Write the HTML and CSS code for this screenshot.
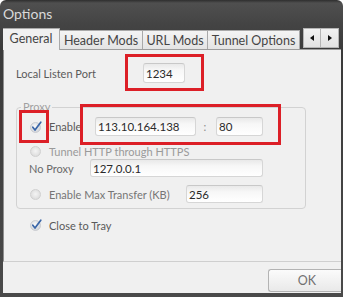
FILE: index.html
```html
<!DOCTYPE html>
<html>
<head>
<meta charset="utf-8">
<link rel="stylesheet" href="styles.css">
</head>
<body>
<div class="window">
  <div class="titlebar">Options</div>
  <div class="tabs">
    <div class="tab active">General</div>
    <div class="tab">Header Mods</div>
    <div class="tab">URL Mods</div>
    <div class="tab">Tunnel Options</div>
    <div class="scrollers">
      <div class="scroll"><span class="arrow arrow-left"></span></div>
      <div class="scroll"><span class="arrow arrow-right"></span></div>
    </div>
  </div>
  <div class="page">
    <div class="port-row">
      <span class="lbl port-lbl">Local Listen Port</span>
      <div class="input w-port">1234</div>
    </div>
    <div class="group">
      <span class="legend">Proxy</span>
      <div class="grow row1">
        <div class="opt w-enable">
          <svg class="check" width="12" height="12" viewBox="0 0 12 12"><defs><radialGradient id="cg" cx="0.45" cy="0.4" r="0.6"><stop offset="0" stop-color="#fafafa"/><stop offset="1" stop-color="#cfd3d8"/></radialGradient></defs><circle cx="5.5" cy="6.5" r="5" fill="url(#cg)" stroke="#c4c7cc" stroke-width="0.8"/><path d="M2.8 6.2 L5 9 L10.8 1.2" fill="none" stroke="#3a66a8" stroke-width="1.7" stroke-linecap="round" stroke-linejoin="round"/></svg>
          <span class="lbl">Enable</span>
        </div>
        <div class="input w-ip">113.10.164.138</div>
        <span class="colon">:</span>
        <div class="input w-pt">80</div>
      </div>
      <div class="grow row2">
        <div class="opt">
          <span class="radio"></span>
          <span class="lbl dim">Tunnel HTTP through HTTPS</span>
        </div>
      </div>
      <div class="grow row3">
        <span class="lbl noproxy">No Proxy</span>
        <div class="input w-np">127.0.0.1</div>
      </div>
      <div class="grow row4">
        <div class="opt w-max">
          <span class="radio"></span>
          <span class="lbl mid">Enable Max Transfer (KB)</span>
        </div>
        <div class="input w-kb">256</div>
      </div>
    </div>
    <div class="tray-row">
      <svg class="check" width="12" height="12" viewBox="0 0 12 12"><defs><radialGradient id="cg2" cx="0.45" cy="0.4" r="0.6"><stop offset="0" stop-color="#fafafa"/><stop offset="1" stop-color="#cfd3d8"/></radialGradient></defs><circle cx="5.5" cy="6.5" r="5" fill="url(#cg2)" stroke="#c4c7cc" stroke-width="0.8"/><path d="M2.8 6.2 L5 9 L10.8 1.2" fill="none" stroke="#3a66a8" stroke-width="1.7" stroke-linecap="round" stroke-linejoin="round"/></svg>
      <span class="lbl">Close to Tray</span>
    </div>
  </div>
  <div class="footer">
    <div class="btn">OK</div>
  </div>
  <div class="mark m1"></div>
  <div class="mark m2"></div>
  <div class="mark m3"></div>
</div>
</body>
</html>
```
FILE: styles.css
```css
* { box-sizing: border-box; }
html, body { margin: 0; padding: 0; background: #ffffff; }
body { font-family: Lato, "Open Sans", sans-serif; font-size: 11px; color: #555; }

.window {
  position: relative;
  width: 343px;
  height: 297px;
  display: flex;
  flex-direction: column;
  padding: 0 2px 4px 3px;
  border-radius: 6px 6px 0 0;
  background: linear-gradient(#2e2e2e 0, #4f4f4f 3px, #444 24px, #3a3a3a 50px, #4a4a4a 100%);
  overflow: hidden;
}

.titlebar {
  height: 27px;
  line-height: 28px;
  color: #d9d9d9;
  font-size: 14px;
  padding-left: 0;
}

.tabs {
  height: 22px;
  display: flex;
  align-items: flex-end;
}
.tab {
  height: 19px;
  padding: 0;
  display: flex;
  align-items: center;
  justify-content: center;
  white-space: nowrap;
  font-size: 12.5px;
  color: #454545;
  background: linear-gradient(#f4f4f4, #e4e4e4);
  border: 1px solid #a9a9a9;
  border-bottom: none;
  border-left: none;
}
.tab:nth-child(2) { width: 83px; }
.tab:nth-child(3) { width: 65px; }
.tab:nth-child(4) { width: 92px; }
.tab.active {
  width: 57px;
  height: 22px;
  margin-bottom: -1px;
  position: relative;
  z-index: 2;
  background: #f0f0f0;
  border-left: none;
  padding-bottom: 2px;
}
.scrollers {
  display: flex;
  margin-left: 3px;
  height: 20px;
  margin-bottom: 1px;
}
.scroll {
  width: 18px;
  height: 20px;
  background: linear-gradient(#f2f2f2, #e2e2e2);
  border: 1px solid #b5b5b5;
  display: flex;
  align-items: center;
  justify-content: center;
}
.scroll + .scroll { border-left: none; }
.arrow { width: 0; height: 0; border-top: 3.5px solid transparent; border-bottom: 3.5px solid transparent; }
.arrow-left { border-right: 4px solid #111; }
.arrow-right { border-left: 4px solid #111; }

.page {
  height: 213px;
  background: #f0f0f0;
  border-top: 1px solid #9c9c9c;
  border-left: 1px solid #8e8e8e;
  border-bottom: 1px solid #cfcfcf;
  display: flex;
  flex-direction: column;
}

.lbl { white-space: nowrap; color: #5a5a5a; }
.dim { color: #9a9a9a; }
.mid { color: #767676; }

.port-row {
  margin-top: 13px;
  height: 20px;
  display: flex;
  align-items: center;
}
.port-lbl { margin-left: 12px; width: 127px; }

.input {
  height: 19px;
  border: 1px solid #d6d6d6;
  border-top-color: #c8c8c8;
  border-radius: 3px;
  background: linear-gradient(#e9e9e9 0, #f7f7f7 6px, #ffffff 100%);
  color: #2a2a2a;
  font-size: 11.5px;
  padding-left: 2px;
  display: flex;
  align-items: center;
  white-space: nowrap;
}
.w-port { width: 42px; height: 20px; }
.w-ip { width: 101px; }
.w-pt { width: 47px; }
.w-np { width: 173px; height: 18px; }
.w-kb { width: 77px; height: 18px; }

.group {
  position: relative;
  margin-top: 24px;
  margin-left: 12px;
  width: 290px;
  height: 102px;
  border: 1px solid #d2d2d2;
  border-radius: 4px;
  padding: 9px 0 0 13px;
  display: flex;
  flex-direction: column;
}
.legend {
  position: absolute;
  left: 4px;
  top: -8px;
  padding: 0 2px;
  background: #f0f0f0;
  color: #a0a0a0;
  line-height: 14px;
}
.grow { display: flex; align-items: center; }
.row1 { height: 19px; }
.row2 { height: 16px; margin-top: 7px; }
.row3 { height: 18px; margin-left: -1px; }
.row4 { height: 18px; margin-top: 8px; }
.opt { display: flex; align-items: center; gap: 7px; }
.w-enable { width: 65px; }
.w-max { width: 156px; }
.noproxy { width: 61px; color: #6a6a6a; }
.colon { width: 18px; text-align: center; color: #8a8a8a; margin-right: 2px; }
.check { flex: none; display: block; }
.radio {
  flex: none;
  width: 11px;
  height: 11px;
  border-radius: 50%;
  border: 1px solid #d0d0d0;
  background: radial-gradient(circle at 50% 45%, #f4f4f4 0, #e2e2e2 60%, #d4d4d4 100%);
  margin-right: 1px;
}

.tray-row {
  margin-top: 9px;
  margin-left: 26px;
  height: 14px;
  display: flex;
  align-items: center;
  gap: 7px;
}

.footer {
  height: 31px;
  background: #f0f0f0;
  display: flex;
  justify-content: flex-end;
  padding-top: 7px;
}
.btn {
  width: 73px;
  height: 23px;
  border: 1px solid #b3b3b3;
  border-right: none;
  border-radius: 3px 0 0 3px;
  background: linear-gradient(#fbfbfb, #e9e9e9);
  color: #707070;
  font-size: 12.5px;
  display: flex;
  align-items: center;
  justify-content: center;
  padding-left: 4px;
}

.mark {
  position: absolute;
  border: 3px solid #dc1f27;
  pointer-events: none;
}
.m1 { left: 125px; top: 54px; width: 79px; height: 37px; }
.m2 { left: 80px; top: 104px; width: 201px; height: 41px; }
.m3 { left: 19px; top: 110px; width: 30px; height: 33px; }
```
